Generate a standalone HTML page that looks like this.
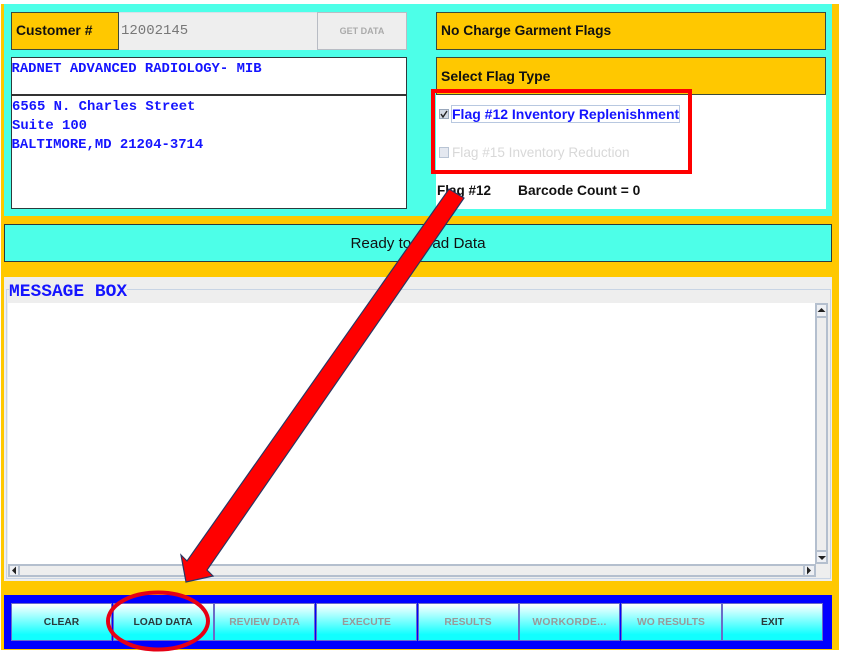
<!DOCTYPE html>
<html><head><meta charset="utf-8"><style>
html,body{margin:0;padding:0;background:#fff}
body{width:843px;height:658px;position:relative;overflow:hidden;font-family:"Liberation Sans",sans-serif}
div{position:absolute;box-sizing:border-box;white-space:nowrap}
.l{background:#ffc800;border:1px solid #3c4a3c;font-weight:bold;font-size:13.8px;color:#111;line-height:35px;padding-left:4px}
.m{font-family:"Liberation Mono",monospace;font-weight:bold;font-size:13.9px;color:#1414ff;left:12px}
.b{top:603px;width:101px;height:38px;background:linear-gradient(#fff,#1ff 85%);border:1px solid #6a6ac8;font-weight:bold;font-size:10.3px;text-align:center;line-height:37px;color:#999}
.k{color:#2a3a3c}
.s{background:#eee;border:2px solid #b4bfce}
.t{background:#eef0f4;border:2px solid #b4bfce}
</style></head><body>
<div style="left:1px;top:4px;width:838px;height:646px;background:#ffc800"></div>
<div style="left:4px;top:4px;width:828px;height:212px;background:#4dffe8"></div>

<div class="l" style="left:11px;top:12px;width:108px;height:38px;padding-left:4px;font-size:13.9px">Customer #</div>
<div style="left:119px;top:12px;width:198px;height:38px;background:#eee;border-top:1px solid #d8e0e8;font-family:'Liberation Mono',monospace;font-size:14px;color:#777;line-height:37px;padding-left:2px">12002145</div>
<div style="left:317px;top:12px;width:90px;height:38px;background:#eee;border:1px solid #b8bcc4;font-size:9px;font-weight:bold;color:#aaa;text-align:center;line-height:37px">GET DATA</div>

<div style="left:11px;top:57px;width:396px;height:152px;background:#fff;border:1px solid #2c3a3c"></div>
<div style="left:11px;top:94px;width:396px;height:2px;background:#333"></div>
<div class="m" style="top:61px;left:11.5px">RADNET ADVANCED RADIOLOGY- MIB</div>
<div class="m" style="top:99px">6565 N. Charles Street</div>
<div class="m" style="top:118px">Suite 100</div>
<div class="m" style="top:137px;left:11.5px">BALTIMORE,MD 21204-3714</div>

<div style="left:436px;top:95px;width:390px;height:114px;background:#fff"></div>
<div class="l" style="left:436px;top:12px;width:390px;height:38px">No Charge Garment Flags</div>
<div class="l" style="left:436px;top:57px;width:390px;height:38px;line-height:37px;font-size:14px">Select Flag Type</div>

<div style="left:439px;top:109px;width:10px;height:10px;background:#d4dae4;border:1px solid #9aa8bc"></div>
<div style="left:451px;top:105px;width:229px;height:18px;border:1px solid #b8c8e0"></div>
<div style="left:452px;top:106px;font-size:14px;font-weight:bold;color:#1414ff;line-height:16px">Flag #12 Inventory Replenishment</div>
<div style="left:439px;top:147px;width:10px;height:11px;background:#e4e8f0;border:1px solid #b8c4d4"></div>
<div style="left:452px;top:145px;font-size:13.6px;color:#d8d8d8;line-height:16px">Flag #15 Inventory Reduction</div>
<div style="left:437px;top:183px;font-size:13.5px;font-weight:bold;color:#111;line-height:16px">Flag #12</div>
<div style="left:518px;top:183px;font-size:13.8px;font-weight:bold;color:#111;line-height:16px">Barcode Count = 0</div>

<div style="left:4px;top:224px;width:828px;height:38px;background:#4dffe8;border:1px solid #2c3a3c;font-size:15.2px;color:#111;text-align:center;line-height:38px">Ready to Load Data</div>

<div style="left:4px;top:277px;width:828px;height:304px;background:#eee"></div>
<div style="left:6px;top:289px;width:825px;height:290px;border:1px solid #c8d4e4"></div>
<div style="left:9px;top:283px;background:#eee;height:18px;font-family:'Liberation Mono',monospace;font-weight:bold;font-size:17.9px;line-height:18px;color:#1414ff">MESSAGE BOX</div>
<div style="left:8px;top:303px;width:808px;height:261px;background:#fff"></div>

<div class="s" style="left:815px;top:303px;width:13px;height:261px"></div>
<div class="t" style="left:815px;top:303px;width:13px;height:15px"></div>
<div class="t" style="left:815px;top:550px;width:13px;height:14px"></div>
<div class="s" style="left:8px;top:564px;width:808px;height:13px"></div>
<div class="t" style="left:8px;top:564px;width:12px;height:13px"></div>
<div class="t" style="left:803px;top:564px;width:13px;height:13px"></div>

<div style="left:4px;top:595px;width:828px;height:54px;background:#0000ff"></div>
<div class="b k" style="left:11px">CLEAR</div>
<div class="b k" style="left:112.500px">LOAD DATA</div>
<div class="b" style="left:214px">REVIEW DATA</div>
<div class="b" style="left:316px">EXECUTE</div>
<div class="b" style="left:417.500px">RESULTS</div>
<div class="b" style="left:519px;letter-spacing:.3px">WORKORDE...</div>
<div class="b" style="left:620.500px">WO RESULTS</div>
<div class="b k" style="left:722px">EXIT</div>

<svg width="843" height="658" style="position:absolute;left:0;top:0">
<path d="M821.500 308l4 4h-8zM818 556h8l-4 4zM12 570.500l4-4v8zM811 570.500l-4-4v8z" fill="#222"/>
<path d="M441 114l2 3 4-6" fill="none" stroke="#222" stroke-width="1.400"/>
<rect x="433" y="91" width="257" height="81" fill="none" stroke="#ff0000" stroke-width="4"/>
<ellipse cx="158" cy="621" rx="50" ry="28.500" fill="none" stroke="#e60014" stroke-width="4"/>
<polygon points="449,189 464,198 207,570 213,576 186,582 181,555 187,561" fill="#ff0000" stroke="#2a3560" stroke-width="1.200"/>
</svg>
</body></html>
